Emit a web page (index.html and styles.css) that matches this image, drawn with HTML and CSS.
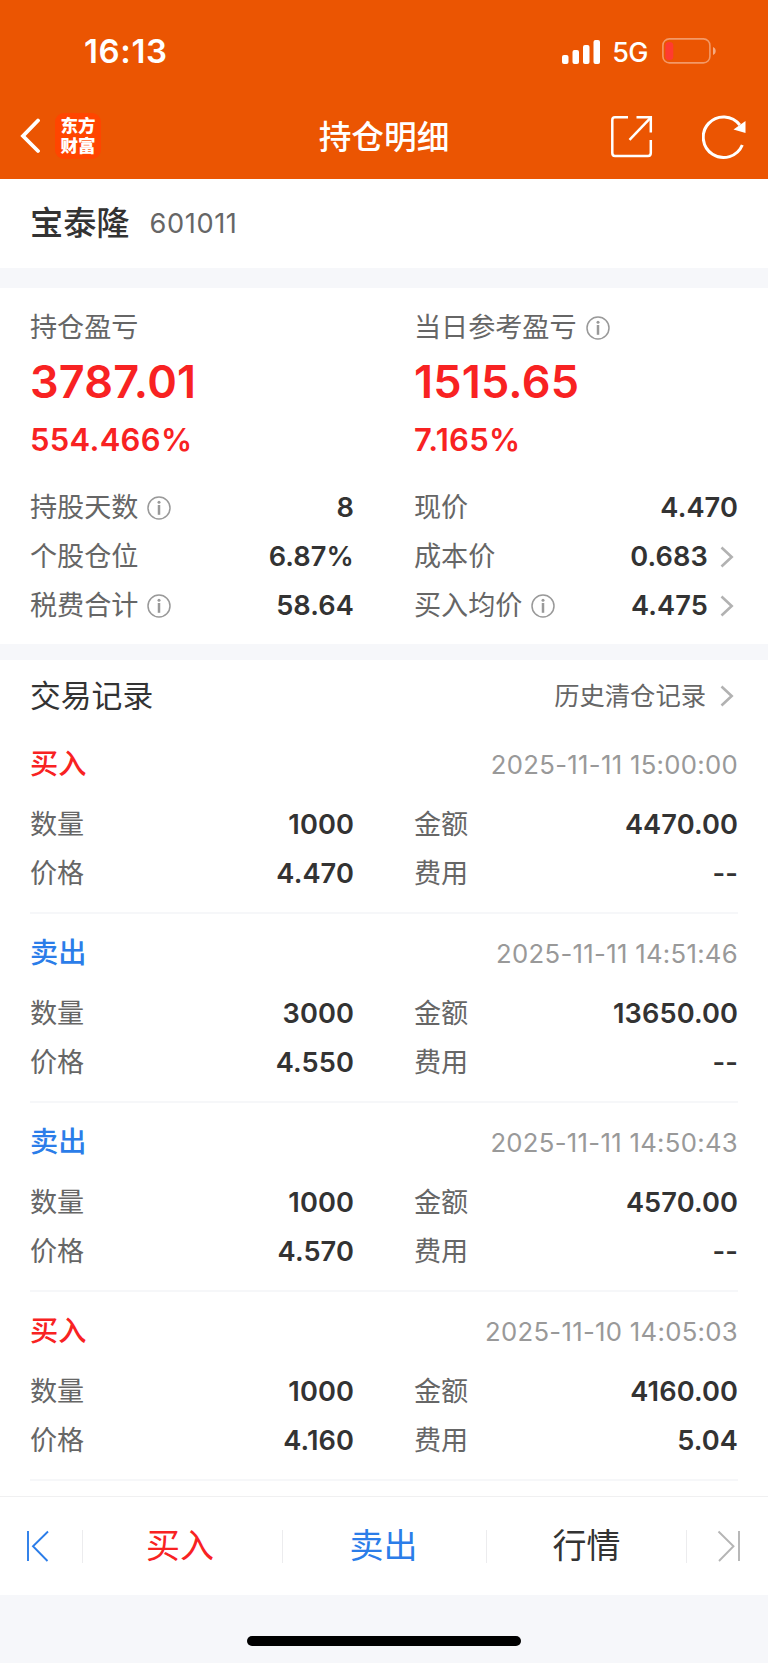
FILE: index.html
```html
<!DOCTYPE html>
<html lang="zh-CN">

<head>
    <meta charset="UTF-8">
    <meta name="viewport" content="width=device-width, initial-scale=1.0">
    <title>持仓明细</title>
    <link rel="stylesheet" href="styles.css">
</head>

<body>
    <!-- shared icons -->
    <svg class="sprite" width="0" height="0">
        <symbol id="icon-info" viewBox="0 0 24 24">
            <circle cx="12" cy="12" r="11" fill="none" stroke="#999" stroke-width="1.5" />
            <circle cx="12" cy="6.3" r="1.5" fill="#999" />
            <path d="M12 9V18.8" fill="none" stroke="#999" stroke-width="2.5" />
        </symbol>
        <symbol id="icon-more" viewBox="0 0 14 22">
            <path d="M1.5 1.5L11.7 11L1.5 20.5" fill="none" stroke="#b2b2b2" stroke-width="2.6" />
        </symbol>
    </svg>

    <header class="header">
        <div class="status-bar">
            <span class="time">16:13</span>
            <div class="status-icons">
                <svg class="signal" width="39" height="24" viewBox="0 0 39 24" fill="#fff">
                    <rect x="0" y="15" width="6.5" height="9" rx="2" />
                    <rect x="10.5" y="10" width="6.5" height="14" rx="2" />
                    <rect x="21" y="5" width="6.5" height="19" rx="2" />
                    <rect x="31.5" y="0" width="6.5" height="24" rx="2" />
                </svg>
                <span class="network">5G</span>
                <svg class="battery" width="54" height="26" viewBox="0 0 54 26">
                    <rect x="0.9" y="0.9" width="47" height="24" rx="6.5" fill="none" stroke="#fff" stroke-opacity="0.4" stroke-width="1.6" />
                    <path d="M51 9C54.6 10.2 54.6 15.8 51 17Z" fill="#fff" fill-opacity="0.5" />
                    <rect x="3.3" y="4" width="8" height="18" rx="3.5" fill="#ff3b30" />
                </svg>
            </div>
        </div>
        <nav class="nav">
            <div class="nav-left">
                <svg width="20" height="36" viewBox="0 0 20 36">
                    <path d="M18 2.5L3 18L18 33" fill="none" stroke="#fff" stroke-width="3.8" stroke-linecap="round" />
                </svg>
                <div class="logo">东方<br>财富</div>
            </div>
            <h1 class="nav-title">持仓明细</h1>
            <div class="nav-right">
                <svg width="44" height="44" viewBox="0 0 44 44" fill="none" stroke="#fff" stroke-width="2.5">
                    <path d="M18 2.3H5Q2.3 2.3 2.3 5V38Q2.3 41 5 41H38Q40.8 41 40.8 38V25M26.5 2.3H40.8V17.5" />
                    <path d="M19.5 24.8L40.5 2.8" />
                </svg>
                <svg width="46" height="46" viewBox="0 0 46 46">
                    <path d="M40.3 31A20.3 20.3 0 1 1 37.8 11" fill="none" stroke="#fff" stroke-width="3" />
                    <path d="M43.5 7V19L31.5 15.5Z" fill="#fff" />
                </svg>
            </div>
        </nav>
    </header>

    <section class="stock">
        <h2 class="stock-name">宝泰隆</h2>
        <span class="stock-code">601011</span>
    </section>

    <section class="position">
        <div class="column">
            <div class="label">持仓盈亏</div>
            <div class="profit">3787.01</div>
            <div class="percent">554.466%</div>
            <div class="row">
                <span class="label">持股天数<svg class="info"><use href="#icon-info" /></svg></span>
                <span class="value">8</span>
            </div>
            <div class="row">
                <span class="label">个股仓位</span>
                <span class="value">6.87%</span>
            </div>
            <div class="row">
                <span class="label">税费合计<svg class="info"><use href="#icon-info" /></svg></span>
                <span class="value">58.64</span>
            </div>
        </div>
        <div class="column">
            <div class="label">当日参考盈亏<svg class="info"><use href="#icon-info" /></svg></div>
            <div class="profit">1515.65</div>
            <div class="percent">7.165%</div>
            <div class="row">
                <span class="label">现价</span>
                <span class="value">4.470</span>
            </div>
            <div class="row">
                <span class="label">成本价</span>
                <span class="value">0.683<svg class="more"><use href="#icon-more" /></svg></span>
            </div>
            <div class="row">
                <span class="label">买入均价<svg class="info"><use href="#icon-info" /></svg></span>
                <span class="value">4.475<svg class="more"><use href="#icon-more" /></svg></span>
            </div>
        </div>
    </section>

    <section class="records">
        <div class="records-head">
            <h3 class="records-title">交易记录</h3>
            <a class="history">历史清仓记录<svg class="more"><use href="#icon-more" /></svg></a>
        </div>

        <div class="record">
            <div class="record-head">
                <span class="type buy">买入</span>
                <span class="date">2025-11-11 15:00:00</span>
            </div>
            <div class="record-grid">
                <div class="row"><span class="label">数量</span><span class="value">1000</span></div>
                <div class="row"><span class="label">金额</span><span class="value">4470.00</span></div>
                <div class="row"><span class="label">价格</span><span class="value">4.470</span></div>
                <div class="row"><span class="label">费用</span><span class="value">--</span></div>
            </div>
        </div>

        <div class="record">
            <div class="record-head">
                <span class="type sell">卖出</span>
                <span class="date">2025-11-11 14:51:46</span>
            </div>
            <div class="record-grid">
                <div class="row"><span class="label">数量</span><span class="value">3000</span></div>
                <div class="row"><span class="label">金额</span><span class="value">13650.00</span></div>
                <div class="row"><span class="label">价格</span><span class="value">4.550</span></div>
                <div class="row"><span class="label">费用</span><span class="value">--</span></div>
            </div>
        </div>

        <div class="record">
            <div class="record-head">
                <span class="type sell">卖出</span>
                <span class="date">2025-11-11 14:50:43</span>
            </div>
            <div class="record-grid">
                <div class="row"><span class="label">数量</span><span class="value">1000</span></div>
                <div class="row"><span class="label">金额</span><span class="value">4570.00</span></div>
                <div class="row"><span class="label">价格</span><span class="value">4.570</span></div>
                <div class="row"><span class="label">费用</span><span class="value">--</span></div>
            </div>
        </div>

        <div class="record">
            <div class="record-head">
                <span class="type buy">买入</span>
                <span class="date">2025-11-10 14:05:03</span>
            </div>
            <div class="record-grid">
                <div class="row"><span class="label">数量</span><span class="value">1000</span></div>
                <div class="row"><span class="label">金额</span><span class="value">4160.00</span></div>
                <div class="row"><span class="label">价格</span><span class="value">4.160</span></div>
                <div class="row"><span class="label">费用</span><span class="value">5.04</span></div>
            </div>
        </div>
    </section>

    <footer class="footer">
        <div class="tabs">
            <div class="tab prev">
                <svg width="24" height="32" viewBox="0 0 24 32" fill="none" stroke="#2b7de9" stroke-width="1.9">
                    <path d="M2 1V31M22 1.5L7 16.2L21.5 31" />
                </svg>
            </div>
            <div class="tab buy">买入</div>
            <div class="tab sell">卖出</div>
            <div class="tab">行情</div>
            <div class="tab next">
                <svg width="24" height="32" viewBox="0 0 24 32" fill="none" stroke="#b5b5b5" stroke-width="1.9">
                    <path d="M22 1V31M1.5 1.5L16.5 16.2L2 31" />
                </svg>
            </div>
        </div>
        <div class="home-indicator"></div>
    </footer>
</body>

</html>
```

FILE: styles.css
```css
* {
    box-sizing: border-box;
}

body {
    margin: 0;
    background-color: #f6f7fa;
    color: #333;
    font-family: Inter, "Noto Sans CJK SC", sans-serif;
    line-height: 1;
}

h1,
h2,
h3 {
    margin: 0;
}

svg {
    display: block;
    flex-shrink: 0;
}

.sprite {
    position: absolute;
}

.buy {
    color: #f82222;
}

.sell {
    color: #2b7de9;
}

/* header */
.header {
    height: 179px;
    background-color: #eb5502;
    color: #fff;
}

.status-bar {
    display: flex;
    justify-content: space-between;
    align-items: center;
    height: 103px;
    padding: 0 52px 0 84px;
}

.time {
    font-size: 33px;
    font-weight: 600;
    letter-spacing: 0.6px;
}

.status-icons {
    display: flex;
    align-items: center;
}

.network {
    margin: 1px 14px 0 11px;
    font-size: 27px;
    font-weight: 500;
    letter-spacing: -0.5px;
}

.battery {
    margin-bottom: 2px;
}

.nav {
    display: grid;
    grid-template-columns: 1fr auto 1fr;
    align-items: center;
    height: 68px;
    padding: 0 20px 0 20px;
}

.nav-left,
.nav-right {
    display: flex;
    align-items: center;
}

.nav-left {
    gap: 15px;
    padding-bottom: 2px;
}

.nav-right {
    justify-content: flex-end;
    gap: 48px;
}

.logo {
    width: 46px;
    height: 46px;
    padding-top: 3px;
    border-radius: 9px;
    background-color: #ff4500;
    font-size: 17.5px;
    font-weight: 900;
    line-height: 19.5px;
    text-align: center;
}

.nav-title {
    font-size: 32.7px;
    font-weight: 500;
}

/* stock */
.stock {
    display: flex;
    align-items: center;
    gap: 20px;
    height: 89px;
    padding: 0 30px;
    background-color: #fff;
}

.stock-name {
    font-size: 33.2px;
    font-weight: 500;
}

.stock-code {
    color: #666;
    font-size: 27.2px;
    letter-spacing: 0.6px;
}

/* position */
.position {
    display: grid;
    grid-template-columns: 1fr 1fr;
    column-gap: 60px;
    height: 356px;
    margin-top: 20px;
    padding: 15px 30px 0;
    background-color: #fff;
}

.label {
    display: flex;
    align-items: center;
    color: #666;
    font-size: 27.1px;
}

.column > .label {
    height: 50px;
}

.info {
    width: 24px;
    height: 24px;
    margin-left: 9px;
}

.profit {
    color: #f82222;
    font-size: 45px;
    font-weight: 600;
    letter-spacing: 0.2px;
    line-height: 58px;
}

.percent {
    margin-bottom: 15px;
    color: #f82222;
    font-size: 31px;
    font-weight: 600;
    letter-spacing: 0.3px;
    line-height: 57px;
}

.row {
    display: flex;
    justify-content: space-between;
    align-items: center;
    height: 49.2px;
}

.value {
    display: flex;
    align-items: center;
    font-size: 27.2px;
    font-weight: 600;
    letter-spacing: 0.1px;
}

.more {
    width: 14px;
    height: 22px;
    margin: 0 4px 0 12px;
}

/* trade records */
.records {
    margin-top: 16px;
    padding: 0 30px 15px;
    background-color: #fff;
}

.records-head {
    display: flex;
    justify-content: space-between;
    align-items: center;
    height: 65px;
    padding-top: 7px;
}

.records-title {
    font-size: 30.8px;
    font-weight: 400;
}

.history {
    display: flex;
    align-items: center;
    color: #666;
    font-size: 25.3px;
}

.history .more {
    margin-left: 14px;
}

.record {
    height: 189px;
    padding-top: 7px;
    border-bottom: 2px solid #f6f7f9;
}

.record-head {
    display: flex;
    justify-content: space-between;
    align-items: center;
    height: 65px;
    margin-bottom: 3px;
}

.type {
    font-size: 28.2px;
    font-weight: 500;
}

.date {
    color: #999;
    font-size: 25.7px;
    letter-spacing: 0.3px;
}

.record-grid {
    display: grid;
    grid-template-columns: 1fr 1fr;
    column-gap: 60px;
}

/* footer */
.tabs {
    display: grid;
    grid-template-columns: 83px 200px 204px 200px 81px;
    align-items: center;
    height: 99px;
    border-top: 1px solid #f0f0f1;
    background-color: #fff;
}

.tab {
    display: flex;
    justify-content: center;
    align-items: center;
    height: 33px;
    border-right: 1px solid #ececee;
    font-size: 34px;
}

.tab.buy {
    padding-right: 5px;
}

.tab.sell {
    padding-right: 2px;
}

.prev {
    justify-content: flex-start;
    padding-left: 26px;
}

.next {
    justify-content: flex-end;
    padding-right: 27px;
    border-right: 0;
}

.home-indicator {
    width: 274px;
    height: 10px;
    margin: 41px auto 17px;
    border-radius: 5px;
    background-color: #000;
}
```
